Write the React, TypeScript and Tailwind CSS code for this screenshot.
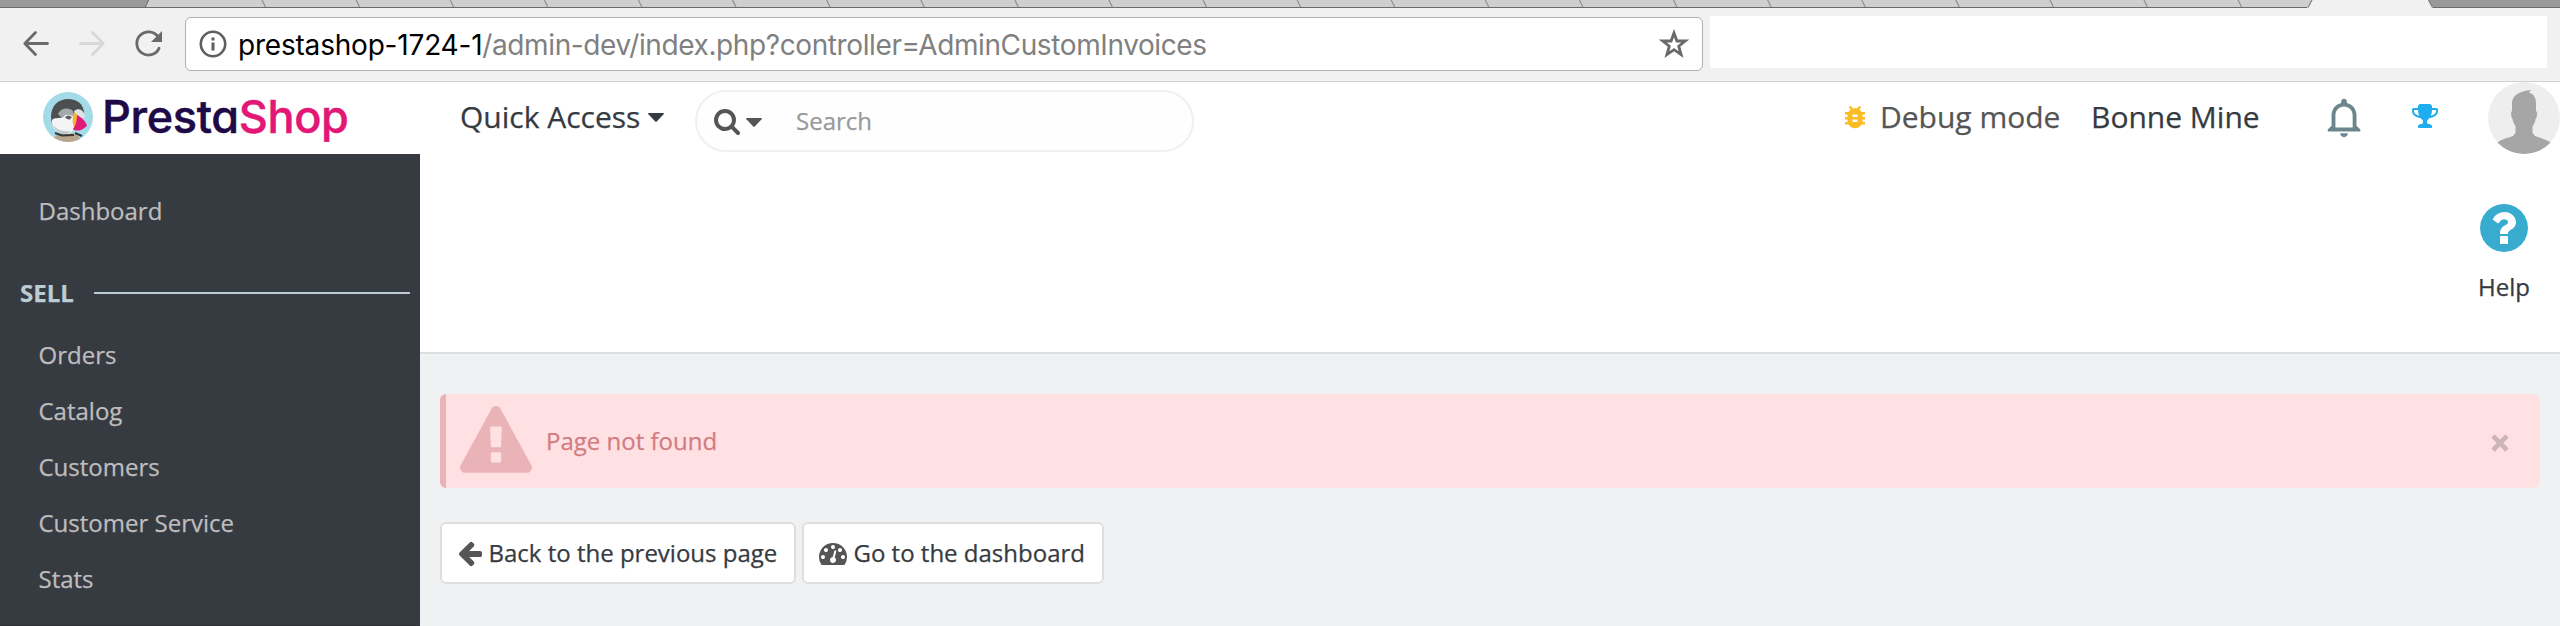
import React from "react";

const FA = {
  warning:
    "M1024 1375v-190q0-14-9.5-23.5t-22.5-9.5h-192q-13 0-22.5 9.5t-9.5 23.5v190q0 14 9.5 23.5t22.5 9.5h192q13 0 22.5-9.5t9.5-23.5zm-2-374l18-459q0-12-10-19-13-11-24-11h-220q-11 0-24 11-10 7-10 21l17 457q0 10 10 16.5t24 6.5h185q14 0 23.5-6.5t10.5-16.5zm-14-934l768 1408q35 63-2 126-17 29-46.5 46t-63.5 17h-1536q-34 0-63.5-17t-46.5-46q-37-63-2-126l768-1408q17-31 47-49t65-18 65 18 47 49z",
  help:
    "M1024 1376v-192q0-14-9-23t-23-9h-192q-14 0-23 9t-9 23v192q0 14 9 23t23 9h192q14 0 23-9t9-23zm256-672q0-88-55.5-163t-138.5-116-170-41q-243 0-371 213-15 24 8 42l132 100q7 6 19 6 16 0 25-12 53-68 86-92 34-24 86-24 48 0 85.5 26t37.5 59q0 38-20 61t-68 45q-63 28-115.5 86.5t-52.5 125.5v36q0 14 9 23t23 9h192q14 0 23-9t9-23q0-19 21.5-49.5t54.5-49.5q32-18 49-28.5t46-35 44.5-48 28-60.5 12.5-81zm384 192q0 209-103 385.5t-279.5 279.5-385.5 103-385.5-103-279.5-279.5-103-385.5 103-385.5 279.5-279.5 385.5-103 385.5 103 279.5 279.5 103 385.5z",
  arrowLeft:
    "M1664 896v128q0 53-32.5 90.5t-84.5 37.5h-704l293 294q38 36 38 90t-38 90l-75 76q-37 37-90 37-52 0-91-37l-651-652q-37-37-37-90 0-52 37-91l651-650q38-38 91-38 52 0 90 38l75 74q38 38 38 91t-38 91l-293 293h704q52 0 84.5 37.5t32.5 90.5z",
  gauge:
    "M384 1152q0-53-37.5-90.5t-90.5-37.5-90.5 37.5-37.5 90.5 37.5 90.5 90.5 37.5 90.5-37.5 37.5-90.5zm192-448q0-53-37.5-90.5t-90.5-37.5-90.5 37.5-37.5 90.5 37.5 90.5 90.5 37.5 90.5-37.5 37.5-90.5zm428 481l101-382q6-26-7.5-48.5t-38.5-29.5-48 6.5-30 39.5l-101 382q-60 5-107 43.5t-63 98.5q-20 77 20 146t117 89 146-20 89-117q16-60-6-117t-72-91zm660-33q0-53-37.5-90.5t-90.5-37.5-90.5 37.5-37.5 90.5 37.5 90.5 90.5 37.5 90.5-37.5 37.5-90.5zm-640-640q0-53-37.5-90.5t-90.5-37.5-90.5 37.5-37.5 90.5 37.5 90.5 90.5 37.5 90.5-37.5 37.5-90.5zm448 192q0-53-37.5-90.5t-90.5-37.5-90.5 37.5-37.5 90.5 37.5 90.5 90.5 37.5 90.5-37.5 37.5-90.5zm320 448q0 261-141 483-19 29-54 29h-1402q-35 0-54-29-141-221-141-483 0-182 71-348t191-286 286-191 348-71 348 71 286 191 191 286 71 348z",
  search:
    "M1216 832q0-185-131.5-316.5t-316.5-131.5-316.5 131.5-131.5 316.5 131.5 316.5 316.5 131.5 316.5-131.5 131.5-316.5zm512 832q0 52-38 90t-90 38q-54 0-90-38l-343-342q-179 124-399 124-143 0-273.5-55.5t-225-150-150-225-55.5-273.5 55.5-273.5 150-225 225-150 273.5-55.5 273.5 55.5 225 150 150 225 55.5 273.5q0 220-124 399l343 343q37 37 37 90z",
  trophy:
    "M522 883q-74-162-74-371h-256v96q0 78 94.5 162t235.5 113zm1078-275v-96h-256q0 209-74 371 141-29 235.5-113t94.5-162zm128-128v128q0 71-41.5 143t-112 130-173 97.5-215.5 44.5q-42 54-95 95-38 34-52.5 72.5t-14.5 89.5q0 54 30.5 91t97.5 37q75 0 133.5 45.5t58.5 114.5v64q0 14-9 23t-23 9h-832q-14 0-23-9t-9-23v-64q0-69 58.5-114.5t133.5-45.5q67 0 97.5-37t30.5-91q0-51-14.5-89.5t-52.5-72.5q-53-41-95-95-113-5-215.5-44.5t-173-97.5-112-130-41.5-143v-128q0-40 28-68t68-28h288v-96q0-66 47-113t113-47h576q66 0 113 47t47 113v96h288q40 0 68 28t28 68z",
};

const MD = {
  bug: "M20 8h-2.81c-.45-.78-1.07-1.45-1.82-1.96L17 4.41 15.59 3l-2.17 2.17C12.96 5.06 12.49 5 12 5c-.49 0-.96.06-1.41.17L8.41 3 7 4.41l1.62 1.63C7.88 6.55 7.26 7.22 6.81 8H4v2h2.09c-.05.33-.09.66-.09 1v1H4v2h2v1c0 .34.04.67.09 1H4v2h2.81c1.04 1.79 2.97 3 5.19 3s4.15-1.21 5.19-3H20v-2h-2.09c.05-.33.09-.66.09-1v-1h2v-2h-2v-1c0-.34-.04-.67-.09-1H20V8zm-6 8h-4v-2h4v2zm0-4h-4v-2h4v2z",
  bell: "M11.5 22c1.1 0 2-.9 2-2h-4c0 1.1.9 2 2 2zm6.5-6v-5.5c0-3.07-2.13-5.64-5-6.32V3.5c0-.83-.67-1.5-1.5-1.5S10 2.67 10 3.5v.68c-2.87.68-5 3.25-5 6.32V16l-2 2v1h17v-1l-2-2zm-2 1H7v-6.5C7 8.01 9.01 6 11.5 6S16 8.01 16 10.5V17z",
};

function Icon({ d, box = 1792, className }: { d: string; box?: number; className: string }) {
  return (
    <svg viewBox={`0 0 ${box} ${box}`} fill="currentColor" className={`shrink-0 ${className}`}>
      <path d={d} />
    </svg>
  );
}

function Caret({ className }: { className: string }) {
  return (
    <svg viewBox="0 0 16 9" fill="currentColor" className={`h-[9px] w-4 shrink-0 ${className}`}>
      <path d="M0.8 0H15.2Q16.4 0.2 15.6 1.2L8.8 8.5Q8 9.2 7.2 8.5L0.4 1.2Q-0.4 0.2 0.8 0Z" />
    </svg>
  );
}

const separators = Array.from({ length: 22 }, (_, i) => 266 + i * 94.1);

function TabStrip() {
  return (
    <svg viewBox="0 0 2560 8" className="block h-2 w-[2560px] shrink-0">
      <rect width="2560" height="8" fill="#999999" />
      <path d="M148 0H2312L2308 8H144Z" fill="#cfcfcf" />
      {separators.map((x) => (
        <path key={x} d={`M${x - 4} 0L${x - 0.5} 7`} stroke="#8f8f8f" strokeWidth="1.2" />
      ))}
      <path d="M148.5 0L145 7.5" stroke="#6f6f6f" strokeWidth="1.2" />
      <rect y="7" width="2560" height="1" fill="#6b6b6b" />
      <path d="M2312 0H2428L2433 8H2307Z" fill="#f1f1f1" />
      <path d="M2312 0L2308 7.5M2428.500 0L2432.500 7.500" stroke="#808080" strokeWidth="1.2" fill="none" />
    </svg>
  );
}

function Toolbar() {
  return (
    <div className="flex h-[74px] items-start border-b border-[#d0d0d0] bg-[#f1f1f1]">
      <svg viewBox="0 0 28 28" className="mt-[21px] ml-[22px] size-7 shrink-0" fill="none" stroke="#6a6a6a" strokeWidth="2.8" strokeLinecap="round" strokeLinejoin="round">
        <path d="M13.500 3.500L2.800 14.500L13.500 25.500M3.200 14.500H25.500" />
      </svg>
      <svg viewBox="0 0 28 28" className="mt-[21px] ml-7 size-7 shrink-0" fill="none" stroke="#d8d8d8" strokeWidth="2.8" strokeLinecap="round" strokeLinejoin="round">
        <path d="M14.500 3.500L25.200 14.500L14.500 25.500M24.800 14.500H2.500" />
      </svg>
      <svg viewBox="0 0 30 28" className="mt-[22px] ml-7 h-7 w-[30px] shrink-0" fill="none" stroke="#6a6a6a" strokeWidth="2.8">
        <path d="M24.200 7.200A11.600 11.600 0 1 0 25 18.300" strokeLinecap="round" />
        <path d="M28 1V12H17Z" fill="#6a6a6a" stroke="none" />
      </svg>
      <div className="mt-[9px] ml-[21px] flex h-[54px] w-[1518px] shrink-0 items-center rounded-[6px] border border-[#b2b2b2] bg-white pr-[13px] pl-[12px]">
        <svg viewBox="0 0 30 30" className="size-[30px] shrink-0">
          <circle cx="15" cy="15" r="12.200" fill="none" stroke="#5f5f5f" strokeWidth="2.600" />
          <path d="M13.500 8.500h3v3h-3zM13.500 13.500h3v8h-3z" fill="#5f5f5f" />
        </svg>
        <div className="mt-[2px] ml-[10px] text-[28px] leading-[36px] whitespace-nowrap text-[#808080] [-webkit-text-stroke:0px] font-['Inter',sans-serif]">
          <span className="tracking-[-0.2px] text-black">prestashop-1724-1</span>
          <span className="tracking-[-0.39px]">/admin-dev/index.php?controller=AdminCustomInvoices</span>
        </div>
        <svg viewBox="0 0 30 30" className="ml-auto size-[30px] shrink-0">
          <path d="M15 4L17.900 12H26.200L19.700 17.200L22.100 25.600L15 20.700L7.900 25.600L10.300 17.200L3.800 12H12.100Z" fill="none" stroke="#6a6a6a" strokeWidth="2.800" />
        </svg>
      </div>
      <div className="mt-2 ml-[7px] h-[52px] w-[837px] shrink-0 bg-white" />
    </div>
  );
}

function Puffin() {
  return (
    <svg viewBox="0 0 50 50" className="size-[50px] shrink-0">
      <defs>
        <clipPath id="badge">
          <circle cx="25" cy="25" r="25" />
        </clipPath>
      </defs>
      <g clipPath="url(#badge)">
        <rect width="50" height="50" fill="#a3dbe8" />
        <path d="M10 50C10 44 15 41 24 41S37 44 38 50Z" fill="#b9a58c" />
        <path d="M8 25C8 13 16 7 25 7S40 12 41 20L36 31L26 41C14 41 8 35 8 25Z" fill="#4b4f50" />
        <path d="M9 28C12 25 15 27 20 25C22 21 30 20 32 24C34 31 31 40 26 42C15 42 8 37 9 28Z" fill="#f4f4f5" />
        <path d="M15 22C18 16 25 15 30 19L31 25C27 22 21 22 19 26Z" fill="#a4a9ab" />
        <path d="M10 33C12 39 17 42 25 42L28 39C19 40 13 37 10 33Z" fill="#c3c8cb" />
        <path d="M31 19C36 15 41 18 42 25L38 27L32 22Z" fill="#dfe3e6" />
        <path d="M22 25Q25 22 29 25L27 27.500Q24 28 22 25Z" fill="#5a6265" />
        <path d="M31 20C34 22 36 24 36 25L32 37C29 33 29 25 31 20Z" fill="#f3b63c" />
        <path d="M34 23C40 26 43 30 44 34L40 37C36 39 32 39 30 37C33 33 34 28 34 23Z" fill="#e21b78" />
        <path d="M12 41L19 43.500L31 43M32 41L39 44" stroke="#35383b" strokeWidth="2" fill="none" />
      </g>
    </svg>
  );
}

function Avatar() {
  return (
    <svg viewBox="0 0 72 72" className="size-[72px] shrink-0">
      <defs>
        <clipPath id="avatar">
          <circle cx="36" cy="36" r="36" />
        </clipPath>
      </defs>
      <g clipPath="url(#avatar)">
        <rect width="72" height="72" fill="#eeeeee" />
        <path d="M24 20C25 12 33 9 43 8L41 10.500C46 12 48 16 48 21V29C50 30 49 36 47.500 37C47 41 45.500 43 44.500 44V51L47 54C53 56 60 58 63 61L72 72H0L9 61C13 57 20 56 25 54L27.500 51V44C26 42 25 40 24.500 37C23 35 22.500 30 24 29Z" fill="#a6a6a6" />
      </g>
    </svg>
  );
}

function Header() {
  return (
    <header className="flex h-[72px] items-start bg-white">
      <div className="flex w-[420px] shrink-0 items-start pt-[10px] pl-[43px]">
        <Puffin />
        <div className="mt-[-1px] ml-[9px] text-[45px] leading-[52px] font-medium tracking-[-0.35px] whitespace-nowrap [-webkit-text-stroke:0.5px] [font-feature-settings:'cv11'] font-['Inter',sans-serif]">
          <span className="text-[#1f0a48]">Presta</span>
          <span className="text-[#e21776]">Shop</span>
        </div>
      </div>
      <div className="mt-[15px] ml-10 flex w-[235px] shrink-0 items-center text-[30px] leading-[40px] whitespace-nowrap">
        <span>Quick Access</span>
        <Caret className="ml-[8px]" />
      </div>
      <div className="mt-[8px] flex h-[62px] w-[499px] shrink-0 items-center rounded-full border-2 border-[#f0f0f0] bg-[#fefefe] pl-4 text-[#555555]">
        <Icon d={FA.search} className="size-7" />
        <Caret className="mt-[2px] ml-[5px]" />
        <span className="ml-[34px] text-[24px] leading-[34px] text-[#999999]">Search</span>
      </div>
      <div className="ml-auto flex items-start text-[30px] leading-[40px] whitespace-nowrap">
        <Icon d={MD.bug} box={24} className="mt-[20px] size-[30px] text-[#fbbb22]" />
        <span className="mt-[15px] ml-[10px] w-[211px] text-[#555555]">Debug mode</span>
        <span className="mt-[15px] w-[231px]">Bonne Mine</span>
        <Icon d={MD.bell} box={24} className="mt-[13px] size-[46px] text-[#6c868e]" />
        <Icon d={FA.trophy} className="mt-5 ml-[43px] size-7 text-[#1eaeef]" />
        <div className="ml-[49px]">
          <Avatar />
        </div>
      </div>
    </header>
  );
}

function Sidebar() {
  return (
    <nav className="flex w-[420px] shrink-0 flex-col border-b border-[#2e3238] bg-[#363a41] pt-[29px] text-[24px] leading-[56px] text-[#bebdbe]">
      <a className="pl-[38.5px]">Dashboard</a>
      <div className="flex h-[88px] items-center pt-[20px] pr-[10px] pl-[20px] text-[#bbcdd2]">
        <span className="w-[74px] font-bold">SELL</span>
        <span className="h-[2px] flex-1 bg-[#bbcdd2]" />
      </div>
      {["Orders", "Catalog", "Customers", "Customer Service", "Stats"].map((item) => (
        <a key={item} className="pl-[38.5px]">
          {item}
        </a>
      ))}
    </nav>
  );
}

function Content() {
  return (
    <main className="flex min-w-0 flex-1 flex-col bg-[#eff1f2] text-[24px]">
      <div className="flex h-[200px] justify-end border-b-2 border-[#dddedf] bg-white pt-[46px] pr-7">
        <div className="flex w-14 flex-col items-center">
          <Icon d={FA.help} className="size-14 text-[#38acce]" />
          <span className="mt-[13px] leading-[36px]">Help</span>
        </div>
      </div>
      <div className="mt-10 mr-5 ml-5 flex h-[94px] items-start rounded-[6px] border-l-[6px] border-[#eab3b7] bg-[#ffe1e3] pl-[14px]">
        <Icon d={FA.warning} className="mt-3 size-[72px] text-[#eab3b7]" />
        <span className="mt-[29px] ml-[14px] leading-[36px] text-[#d27c82]">Page not found</span>
        <svg viewBox="0 0 18 18" className="mt-[40px] mr-[31px] ml-auto size-[18px]" stroke="#cdb4b6" strokeWidth="4.600" fill="none">
          <path d="M2 2L16 16M16 2L2 16" />
        </svg>
      </div>
      <div className="mt-[34px] ml-5 flex gap-[6px] leading-[36px] whitespace-nowrap">
        <button className="flex h-[62px] w-[356px] items-center rounded-[6px] border-2 border-[#dedede] bg-white pl-[14px]">
          <Icon d={FA.arrowLeft} className="size-7 text-[#555555]" />
          <span className="ml-[4.5px]">Back to the previous page</span>
        </button>
        <button className="flex h-[62px] w-[302px] items-center rounded-[6px] border-2 border-[#dedede] bg-white pl-[15px]">
          <Icon d={FA.gauge} className="size-7 text-[#555555]" />
          <span className="ml-[6.5px]">Go to the dashboard</span>
        </button>
      </div>
    </main>
  );
}

export default function App() {
  return (
    <div className="flex h-[626px] w-[2560px] flex-col overflow-hidden bg-white text-[#363a41] font-['Open_Sans',sans-serif] [-webkit-text-stroke:0.25px]">
      <TabStrip />
      <Toolbar />
      <Header />
      <div className="flex min-h-0 flex-1">
        <Sidebar />
        <Content />
      </div>
    </div>
  );
}
